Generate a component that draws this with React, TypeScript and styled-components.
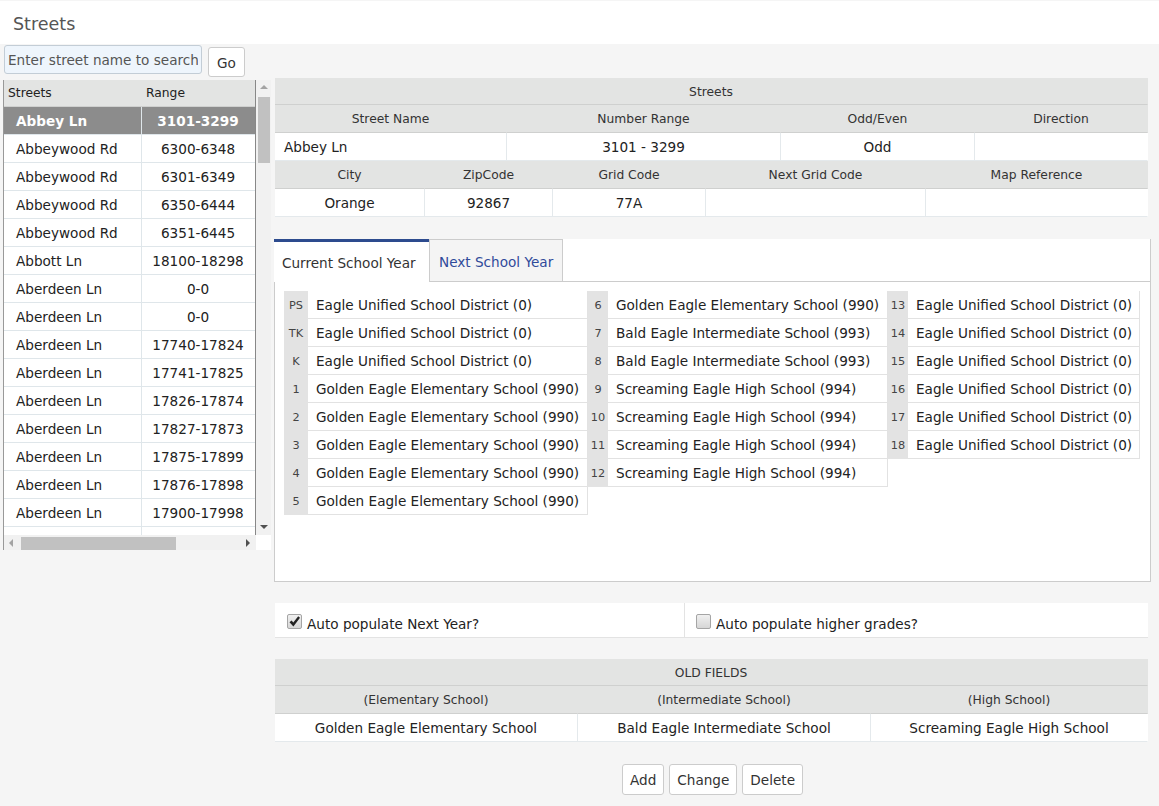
import React from 'react';
import styled, { createGlobalStyle } from 'styled-components';

const GlobalStyle = createGlobalStyle`
  body {
    margin: 0;
    background: #f5f5f5;
    font-family: "DejaVu Sans", Verdana, sans-serif;
    font-size: 13.6px;
    color: #222;
  }
  * { box-sizing: border-box; }
`;

const streets: [string, string][] = [
  ['Abbey Ln', '3101-3299'],
  ['Abbeywood Rd', '6300-6348'],
  ['Abbeywood Rd', '6301-6349'],
  ['Abbeywood Rd', '6350-6444'],
  ['Abbeywood Rd', '6351-6445'],
  ['Abbott Ln', '18100-18298'],
  ['Aberdeen Ln', '0-0'],
  ['Aberdeen Ln', '0-0'],
  ['Aberdeen Ln', '17740-17824'],
  ['Aberdeen Ln', '17741-17825'],
  ['Aberdeen Ln', '17826-17874'],
  ['Aberdeen Ln', '17827-17873'],
  ['Aberdeen Ln', '17875-17899'],
  ['Aberdeen Ln', '17876-17898'],
  ['Aberdeen Ln', '17900-17998'],
  ['', ''],
];

const EUSD = 'Eagle Unified School District (0)';
const GEES = 'Golden Eagle Elementary School (990)';
const BEIS = 'Bald Eagle Intermediate School (993)';
const SEHS = 'Screaming Eagle High School (994)';

const gradeColumns: { width: number; rows: [string, string][] }[] = [
  {
    width: 280,
    rows: [['PS', EUSD], ['TK', EUSD], ['K', EUSD], ['1', GEES], ['2', GEES], ['3', GEES], ['4', GEES], ['5', GEES]],
  },
  {
    width: 280,
    rows: [['6', GEES], ['7', BEIS], ['8', BEIS], ['9', SEHS], ['10', SEHS], ['11', SEHS], ['12', SEHS]],
  },
  {
    width: 232,
    rows: [['13', EUSD], ['14', EUSD], ['15', EUSD], ['16', EUSD], ['17', EUSD], ['18', EUSD]],
  },
];

/* ---------- page frame ---------- */

const TitleBar = styled.div`
  margin-top: 1px;
  height: 43px;
  line-height: 46px;
  padding-left: 13px;
  background: #fff;
  font-size: 17.5px;
  color: #555;
`;

const Layout = styled.div`
  display: flex;
  align-items: flex-start;
`;

const LeftCol = styled.div`
  width: 267px;
  margin-left: 3px;
  padding-top: 1px;
`;

const RightCol = styled.div`
  width: 877px;
  margin-left: 4px;
  padding-top: 34px;
  display: flex;
  flex-direction: column;
`;

/* ---------- search ---------- */

const SearchRow = styled.div`
  display: flex;
  align-items: flex-start;
  gap: 6px;
`;

const SearchInput = styled.input`
  width: 198px;
  height: 29px;
  margin-left: 1px;
  padding: 1px 3px 0;
  border: 1px solid #c3cdd6;
  border-radius: 3px;
  background: #eef5fc;
  font: inherit;
  color: #333;
  &::placeholder { color: #555; }
`;

const Button = styled.button`
  height: 31px;
  padding: 1px 7px 0;
  background: #fff;
  border: 1px solid #ccc;
  border-radius: 3px;
  font: inherit;
  color: #333;
`;

const GoButton = styled(Button)`
  margin-top: 2px;
  height: 30px;
  padding: 2px 8px 0;
`;

/* ---------- street list ---------- */

const ListBox = styled.div`
  margin-top: 3px;
  width: 267px;
  height: 470px;
  display: grid;
  grid-template-columns: 252px 15px;
  grid-template-rows: 455px 15px;
  border-left: 1px solid #999;
`;

const ListViewport = styled.div`
  overflow: hidden;
  background: #fff;
  border-right: 1px solid #888;
`;

const ListRow = styled.div<{ $selected?: boolean; $head?: boolean }>`
  display: grid;
  grid-template-columns: 138px 112px;
  height: ${p => (p.$head ? 27 : 28)}px;
  line-height: ${p => (p.$head ? 27 : 29)}px;
  background: ${p => (p.$head ? '#e3e4e3' : p.$selected ? '#8c8c8c' : '#fff')};
  color: ${p => (p.$selected ? '#fff' : '#222')};
  font-weight: ${p => (p.$selected ? 'bold' : 'normal')};
  font-size: ${p => (p.$head ? '12.3px' : 'inherit')};
  border-bottom: 1px solid ${p => (p.$head ? '#cfd0cf' : '#dfe6ea')};
  white-space: nowrap;
`;

const NameCell = styled.div<{ $head?: boolean }>`
  padding-left: ${p => (p.$head ? 4 : 12)}px;
  border-right: 1px solid ${p => (p.$head ? 'transparent' : '#dfe6ea')};
  overflow: hidden;
`;

const RangeCell = styled.div<{ $head?: boolean }>`
  padding-left: ${p => (p.$head ? 4 : 0)}px;
  text-align: ${p => (p.$head ? 'left' : 'center')};
`;

const VScroll = styled.div`
  position: relative;
  background: #f1f1f1;
`;

const HScroll = styled.div`
  position: relative;
  background: #f1f1f1;
`;

const Corner = styled.div`
  background: #fff;
`;

const Thumb = styled.div`
  position: absolute;
  background: #c1c1c1;
`;

const Arrow = styled.span<{ $dir: 'up' | 'down' | 'left' | 'right'; $dim?: boolean }>`
  position: absolute;
  width: 0;
  height: 0;
  ${p => {
    const c = p.$dim ? '#a3a3a3' : '#505050';
    switch (p.$dir) {
      case 'up':
        return `left: 4px; top: 5px; border-left: 4px solid transparent; border-right: 4px solid transparent; border-bottom: 4px solid ${c};`;
      case 'down':
        return `left: 4px; bottom: 6px; border-left: 4px solid transparent; border-right: 4px solid transparent; border-top: 4px solid ${c};`;
      case 'left':
        return `left: 5px; top: 4px; border-top: 4px solid transparent; border-bottom: 4px solid transparent; border-right: 4px solid ${c};`;
      default:
        return `right: 6px; top: 4px; border-top: 4px solid transparent; border-bottom: 4px solid transparent; border-left: 4px solid ${c};`;
    }
  }}
`;

/* ---------- tables on the right ---------- */

const Block = styled.div<{ $gap?: number }>`
  width: 873px;
  margin-left: 1px;
  margin-top: ${p => p.$gap ?? 0}px;
  background: #fff;
`;

const GridRow = styled.div<{ $cols: string; $head?: boolean }>`
  display: grid;
  grid-template-columns: ${p => p.$cols};
  background: ${p => (p.$head ? '#e3e4e3' : '#fff')};
  font-size: ${p => (p.$head ? '12.3px' : 'inherit')};
  color: ${p => (p.$head ? '#333' : '#222')};
`;

const Cell = styled.div<{ $head?: boolean; $left?: boolean; $h?: number }>`
  height: ${p => p.$h ?? 28}px;
  line-height: ${p => (p.$h ?? 28) + 1}px;
  padding: 0 9px;
  text-align: ${p => (p.$left ? 'left' : 'center')};
  white-space: nowrap;
  overflow: hidden;
  border-bottom: 1px solid ${p => (p.$head ? '#cfd0cf' : '#e4e9ec')};
  border-right: 1px solid ${p => (p.$head ? 'transparent' : '#e4e9ec')};
  &:last-child { border-right-color: transparent; }
`;

/* ---------- tabs ---------- */

const TabPanel = styled.div`
  margin-top: 22px;
  width: 877px;
  background: #fff;
  border-left: 1px solid #ccc;
  border-right: 1px solid #ccc;
  border-bottom: 1px solid #ccc;
`;

const TabBar = styled.div`
  display: flex;
  align-items: flex-end;
  height: 43px;
  border-bottom: 1px solid #ccc;
  margin-left: -1px;
`;

const Tab = styled.div<{ $active?: boolean }>`
  height: ${p => (p.$active ? 43 : 42)}px;
  margin-bottom: ${p => (p.$active ? -1 : 0)}px;
  padding: 0 9px;
  line-height: 44px;
  background: ${p => (p.$active ? '#fff' : '#f4f4f4')};
  border-top: ${p => (p.$active ? '3px solid #2d4b8e' : '1px solid #ccc')};
  border-left: ${p => (p.$active ? 'none' : '1px solid #ccc')};
  border-right: ${p => (p.$active ? 'none' : '1px solid #ccc')};
  color: ${p => (p.$active ? '#333' : '#2f4a9a')};
  ${p => (p.$active ? 'width: 155px; padding-left: 8px; line-height: 42px;' : '')}
  white-space: nowrap;
`;

const TabContent = styled.div`
  height: 299px;
  padding: 9px 9px;
  display: flex;
  align-items: flex-start;
`;

const GradeCol = styled.div`
  display: flex;
  flex-direction: column;
`;

const GradeRow = styled.div`
  display: flex;
  height: 28px;
`;

const GradeLabel = styled.div<{ $w: number }>`
  width: ${p => p.$w}px;
  background: #e3e3e3;
  font-size: 11.3px;
  color: #444;
  text-align: center;
  line-height: 29px;
`;

const GradeText = styled.div<{ $w: number }>`
  width: ${p => p.$w}px;
  padding-left: 8px;
  line-height: 29px;
  white-space: nowrap;
  border-bottom: 1px solid #e2e2e2;
  border-right: 1px solid #e2e2e2;
  color: #222;
`;

/* ---------- checkboxes ---------- */

const CheckRow = styled.div`
  margin-top: 21px;
  width: 873px;
  margin-left: 1px;
  display: grid;
  grid-template-columns: 409px 464px;
  background: #fff;
  border-bottom: 1px solid #e3e3e3;
`;

const CheckCell = styled.label<{ $pad: number }>`
  height: 34px;
  display: flex;
  align-items: center;
  padding-left: ${p => p.$pad}px;
  padding-top: 7px;
  gap: 5px;
  color: #222;
  & + & { border-left: 1px solid #e3e3e3; }
`;

const Box = styled.span`
  width: 15px;
  height: 15px;
  border: 1px solid #a5a5a5;
  border-radius: 2px;
  background: linear-gradient(#f0f0f0, #d6d6d6);
  display: inline-flex;
  align-items: center;
  justify-content: center;
  margin-top: -5px;
`;

const Checkbox = ({ checked }: { checked?: boolean }) => (
  <Box>
    {checked && (
      <svg width="13" height="13" viewBox="0 0 13 13">
        <path d="M1.5 7.2 L3.6 5.4 L5.3 7.6 L10.2 1.2 L12 2.8 L5.4 11.5 Z" fill="#222" />
      </svg>
    )}
  </Box>
);

/* ---------- buttons ---------- */

const ButtonBar = styled.div`
  margin-top: 22px;
  display: flex;
  justify-content: center;
  gap: 5px;
`;

const ST_ROW1 = '232px 274px 194px 173px';
const ST_ROW2 = '150px 128px 153px 220px 222px';
const OLD_COLS = '303px 293px 277px';

export default function App() {
  return (
    <>
      <GlobalStyle />
      <TitleBar>Streets</TitleBar>
      <Layout>
        <LeftCol>
          <SearchRow>
            <SearchInput placeholder="Enter street name to search" />
            <GoButton>Go</GoButton>
          </SearchRow>
          <ListBox>
            <ListViewport>
              <ListRow $head>
                <NameCell $head>Streets</NameCell>
                <RangeCell $head>Range</RangeCell>
              </ListRow>
              {streets.map(([name, range], i) => (
                <ListRow key={i} $selected={i === 0}>
                  <NameCell>{name}</NameCell>
                  <RangeCell>{range}</RangeCell>
                </ListRow>
              ))}
            </ListViewport>
            <VScroll>
              <Arrow $dir="up" $dim />
              <Thumb style={{ left: 2, right: 1, top: 17, height: 66 }} />
              <Arrow $dir="down" />
            </VScroll>
            <HScroll>
              <Arrow $dir="left" $dim />
              <Thumb style={{ left: 17, width: 155, top: 2, bottom: 0 }} />
              <Arrow $dir="right" />
            </HScroll>
            <Corner />
          </ListBox>
        </LeftCol>

        <RightCol>
          <Block>
            <GridRow $cols="1fr" $head>
              <Cell $head $h={27}>Streets</Cell>
            </GridRow>
            <GridRow $cols={ST_ROW1} $head>
              <Cell $head>Street Name</Cell>
              <Cell $head>Number Range</Cell>
              <Cell $head>Odd/Even</Cell>
              <Cell $head>Direction</Cell>
            </GridRow>
            <GridRow $cols={ST_ROW1}>
              <Cell $left>Abbey Ln</Cell>
              <Cell>3101 - 3299</Cell>
              <Cell>Odd</Cell>
              <Cell></Cell>
            </GridRow>
            <GridRow $cols={ST_ROW2} $head>
              <Cell $head>City</Cell>
              <Cell $head>ZipCode</Cell>
              <Cell $head>Grid Code</Cell>
              <Cell $head>Next Grid Code</Cell>
              <Cell $head>Map Reference</Cell>
            </GridRow>
            <GridRow $cols={ST_ROW2}>
              <Cell>Orange</Cell>
              <Cell>92867</Cell>
              <Cell>77A</Cell>
              <Cell></Cell>
              <Cell></Cell>
            </GridRow>
          </Block>

          <TabPanel>
            <TabBar>
              <Tab $active>Current School Year</Tab>
              <Tab>Next School Year</Tab>
            </TabBar>
            <TabContent>
              {gradeColumns.map((col, ci) => (
                <GradeCol key={ci}>
                  {col.rows.map(([grade, school]) => (
                    <GradeRow key={grade}>
                      <GradeLabel $w={ci === 0 ? 24 : 20}>{grade}</GradeLabel>
                      <GradeText $w={col.width}>{school}</GradeText>
                    </GradeRow>
                  ))}
                </GradeCol>
              ))}
            </TabContent>
          </TabPanel>

          <CheckRow>
            <CheckCell $pad={12}>
              <Checkbox checked />
              Auto populate Next Year?
            </CheckCell>
            <CheckCell $pad={11}>
              <Checkbox />
              Auto populate higher grades?
            </CheckCell>
          </CheckRow>

          <Block $gap={21}>
            <GridRow $cols="1fr" $head>
              <Cell $head $h={27}>OLD FIELDS</Cell>
            </GridRow>
            <GridRow $cols={OLD_COLS} $head>
              <Cell $head>(Elementary School)</Cell>
              <Cell $head>(Intermediate School)</Cell>
              <Cell $head>(High School)</Cell>
            </GridRow>
            <GridRow $cols={OLD_COLS}>
              <Cell>Golden Eagle Elementary School</Cell>
              <Cell>Bald Eagle Intermediate School</Cell>
              <Cell>Screaming Eagle High School</Cell>
            </GridRow>
          </Block>

          <ButtonBar>
            <Button>Add</Button>
            <Button>Change</Button>
            <Button>Delete</Button>
          </ButtonBar>
        </RightCol>
      </Layout>
    </>
  );
}
